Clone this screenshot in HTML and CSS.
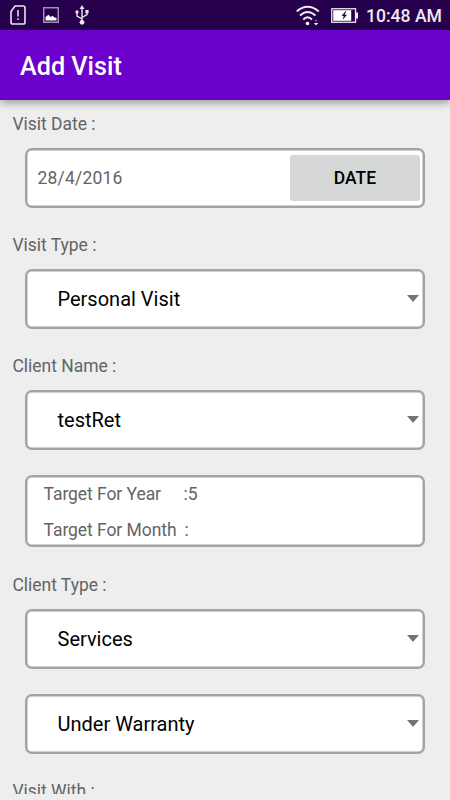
FILE: index.html
```html
<!DOCTYPE html>
<html lang="en">
<head>
  <meta charset="UTF-8" />
  <meta name="viewport" content="width=device-width, initial-scale=1.0" />
  <title>Add Visit</title>
  <link rel="stylesheet" href="styles.css">
</head>
<body>

<div class="status-bar">
  <div class="status-icons">
    <svg class="sim-icon" width="16" height="20" viewBox="0 0 16 20">
      <path d="M5 1h8.2Q15 1 15 2.8v14.4Q15 19 13.2 19H2.8Q1 19 1 17.2V6.5Z" fill="none" stroke="#e9e5ef" stroke-width="1.6" />
      <path d="M8 5v6.5M8 13.2v1.8" stroke="#e9e5ef" stroke-width="1.5" />
    </svg>
    <svg class="image-icon" width="16" height="16" viewBox="0 0 16 16">
      <rect x="0.75" y="0.75" width="14.5" height="14.5" fill="none" stroke="#a79bb5" stroke-width="1.4" />
      <path d="M2.5 13.5V10L5.5 7.7l2 2.3L9.5 8.7l2 1.8 2 .2v2.8Z" fill="#fff" />
    </svg>
    <svg class="usb-icon" width="14" height="20" viewBox="0 0 14 20">
      <path d="M7 3v14M7 14L2 11V7M7 12.5l5-3V5" fill="none" stroke="#e9e5ef" stroke-width="1.4" />
      <path d="M7 0l2.5 4h-5Z" fill="#e9e5ef" />
      <circle cx="2" cy="7" r="1.7" fill="#e9e5ef" />
      <rect x="10.4" y="5" width="3.2" height="3.2" fill="#e9e5ef" />
      <circle cx="7" cy="17.3" r="2.4" fill="#e9e5ef" />
    </svg>
  </div>
  <div class="status-right">
    <svg class="wifi-icon" width="24" height="21" viewBox="0 0 24 21">
      <g fill="none" stroke="#f1edf5" stroke-width="2">
        <path d="M.7 6.5Q11.5-3 22.8 6.5" />
        <path d="M4 10.5Q11.5 3.5 19.5 10.5" />
        <path d="M7.3 14.5Q11.5 10 16 14.5" />
      </g>
      <circle cx="11.5" cy="18.5" r="1.8" fill="#fff" />
      <path d="M18.5 16.3l1.6-1.8 1.6 1.8Z" fill="#8c7d9d" />
      <path d="M18 18h4.2l-2.1 2.4Z" fill="#fff" />
    </svg>
    <svg class="battery-icon" width="27" height="15" viewBox="0 0 27 15">
      <rect x="0.75" y="0.75" width="23.8" height="13.5" fill="#26004d" stroke="#eeeaf2" stroke-width="1.3" />
      <rect x="2.2" y="2.2" width="18" height="10.6" fill="#fff" />
      <rect x="25" y="4.5" width="2" height="6" fill="#eeeaf2" />
      <path d="M14.5 3.2L10.5 8h2.2l-1 3.8L16 6.8H13.6l1.7-3.6Z" fill="#26004d" />
    </svg>
    <span class="clock">10:48 AM</span>
  </div>
</div>

<header class="app-bar">
  <h1>Add Visit</h1>
</header>

<main class="form">
  <label class="label">Visit Date :</label>
  <div class="box date-box">
    <span class="date">28/4/2016</span>
    <button class="date-btn">DATE</button>
  </div>

  <label class="label">Visit Type :</label>
  <div class="box spinner">
    <span>Personal Visit</span>
    <i class="arrow"></i>
  </div>

  <label class="label">Client Name :</label>
  <div class="box spinner">
    <span>testRet</span>
    <i class="arrow"></i>
  </div>

  <div class="box targets">
    <div class="target"><span class="target-year">Target For Year</span><span>:5</span></div>
    <div class="target"><span class="target-month">Target For Month</span><span>:</span></div>
  </div>

  <label class="label">Client Type :</label>
  <div class="box spinner">
    <span>Services</span>
    <i class="arrow"></i>
  </div>
  <div class="box spinner">
    <span>Under Warranty</span>
    <i class="arrow"></i>
  </div>

  <label class="label">Visit With :</label>
</main>

</body>
</html>
```

FILE: styles.css
```css
* {
  box-sizing: border-box;
}

body {
  margin: 0;
  height: 800px;
  overflow: hidden;
  background: #eeeeee;
  font-family: Roboto, "Liberation Sans", sans-serif;
  color: #646464;
}

.status-bar {
  height: 30px;
  padding: 0 8px 0 10px;
  display: flex;
  justify-content: space-between;
  align-items: center;
  background: #26004d;
}

.status-icons,
.status-right {
  display: flex;
  align-items: center;
}

.image-icon {
  margin-left: 17px;
}

.usb-icon {
  margin-left: 16px;
}

.wifi-icon {
  margin-right: 11px;
}

.battery-icon {
  margin-right: 8px;
}

.clock {
  padding-top: 1px;
  font-size: 17.6px;
  font-weight: 500;
  line-height: 30px;
  color: #eeeaf2;
  white-space: nowrap;
}

.app-bar {
  position: relative;
  height: 70px;
  padding: 3px 20px 0;
  display: flex;
  align-items: center;
  background: #6c00cc;
  box-shadow: 0 3px 8px rgba(0, 0, 0, 0.35);
}

h1 {
  margin: 0;
  font-size: 25.2px;
  font-weight: 500;
  color: #fff;
}

.form {
  height: 694px;
  padding: 12px 25px 0 12.5px;
  overflow: hidden;
}

.label {
  display: block;
  height: 24px;
  margin-bottom: 12px;
  font-size: 17.5px;
  line-height: 25px;
  letter-spacing: -0.03px;
}

.box {
  height: 59.5px;
  margin: 0 0 25.5px 12.5px;
  display: flex;
  align-items: center;
  background: #fff;
  border: 2px solid #a3a3a3;
  border-radius: 7px;
  box-shadow: inset 0 0 0 0.5px #a3a3a3;
}

.date-box {
  justify-content: space-between;
  padding: 0 3px 0 10.5px;
}

.date {
  font-size: 17.5px;
  letter-spacing: 0.2px;
}

.date-btn {
  width: 130px;
  height: 46px;
  padding: 0;
  border: none;
  border-radius: 3px;
  background: #d6d8d7;
  font-family: inherit;
  font-size: 17.5px;
  font-weight: 500;
  color: #000;
}

.spinner {
  justify-content: space-between;
  padding: 1px 4px 0 30.5px;
  font-size: 20px;
  color: #000;
}

.arrow {
  margin-bottom: 2px;
  border: 6.5px solid transparent;
  border-top: 7px solid #737373;
  border-bottom: none;
}

.targets {
  height: 72px;
  margin-bottom: 26px;
  padding-left: 16.5px;
  flex-direction: column;
  align-items: flex-start;
  justify-content: flex-start;
  font-size: 17.5px;
  letter-spacing: -0.06px;
}

.target {
  display: flex;
  flex-shrink: 0;
  height: 36px;
  line-height: 35px;
}

.target-year {
  width: 140px;
}

.target-month {
  width: 141px;
}
```
